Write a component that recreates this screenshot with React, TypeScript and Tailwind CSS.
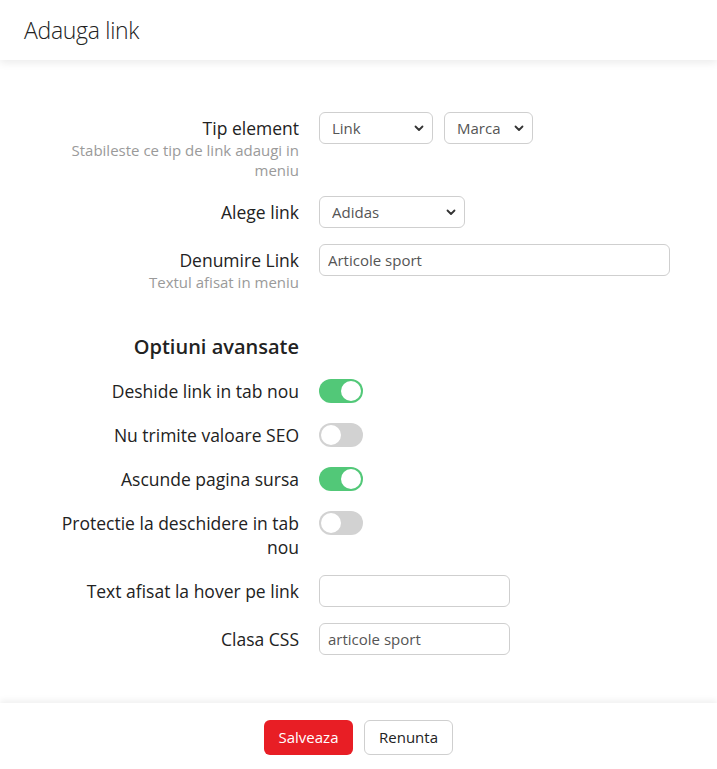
import { useState } from 'react'

function Chevron() {
  return (
    <svg width="10" height="7" viewBox="0 0 10 7" className="pointer-events-none absolute right-[9px] top-[13px]">
      <path d="M1.5 1.5 L5 5 L8.5 1.5" fill="none" stroke="#333" strokeWidth="1.8" strokeLinecap="round" strokeLinejoin="round" />
    </svg>
  )
}

function Select({ value, options, width }: { value: string; options: string[]; width: string }) {
  return (
    <div className={`relative ${width}`}>
      <select
        defaultValue={value}
        className="h-8 w-full appearance-none rounded-md border border-[#cfcfcf] bg-white pl-3 pr-7 text-[15px] text-[#555]"
      >
        {options.map((o) => (
          <option key={o}>{o}</option>
        ))}
      </select>
      <Chevron />
    </div>
  )
}

function Toggle({ on }: { on: boolean }) {
  const [v, setV] = useState(on)
  return (
    <button
      onClick={() => setV(!v)}
      className={`relative h-6 w-11 shrink-0 rounded-full transition ${v ? 'bg-[#52c878]' : 'bg-[#d2d2d2]'}`}
    >
      <span className={`absolute top-[2px] h-5 w-5 rounded-full bg-white transition-all ${v ? 'left-[22px]' : 'left-[2px]'}`} />
    </button>
  )
}

function Label({ text, hint }: { text: string; hint?: string }) {
  return (
    <div className="w-[319px] shrink-0 pl-[50px] pr-5 text-right">
      <div className="pt-1 text-[17.5px] leading-6 text-[#222]">{text}</div>
      {hint && <div className="text-[15px] leading-[20px] text-[#9a9a9a]">{hint}</div>}
    </div>
  )
}

function ToggleRow({ text, on }: { text: string; on: boolean }) {
  return (
    <div className="flex items-start">
      <div className="w-[319px] shrink-0 pl-[50px] pr-5 text-right text-[17.5px] leading-6 text-[#222]">{text}</div>
      <Toggle on={on} />
    </div>
  )
}

export default function App() {
  return (
    <div className="flex h-[769px] w-[717px] flex-col bg-white font-['Open_Sans',sans-serif]">
      {/* Header */}
      <div className="relative z-10 flex h-[60px] shrink-0 items-center px-6 shadow-[0_3px_8px_rgba(0,0,0,0.08)]">
        <h1 className="text-[23px] font-light tracking-[-0.3px] text-[#222]">Adauga link</h1>
      </div>

      {/* Body */}
      <div className="flex-1 pt-[52px]">
        <div className="flex items-start">
          <Label text="Tip element" hint="Stabileste ce tip de link adaugi in meniu" />
          <div className="flex gap-[11px]">
            <Select value="Link" options={['Link', 'Pagina', 'Categorie']} width="w-[114px]" />
            <Select value="Marca" options={['Marca', 'Produs']} width="w-[89px]" />
          </div>
        </div>

        <div className="mt-4 flex items-start">
          <Label text="Alege link" />
          <Select value="Adidas" options={['Adidas', 'Nike', 'Puma']} width="w-[146px]" />
        </div>

        <div className="mt-4 flex items-start">
          <Label text="Denumire Link" hint="Textul afisat in meniu" />
          <input
            defaultValue="Articole sport"
            className="h-8 w-[351px] rounded-md border border-[#cfcfcf] px-2 text-[15px] text-[#555]"
          />
        </div>

        <div className="mt-[41px] w-[319px] pr-5 text-right text-[20px] leading-[28px] font-semibold text-[#222]">
          Optiuni avansate
        </div>

        <div className="mt-[18px] flex flex-col gap-5">
          <ToggleRow text="Deshide link in tab nou" on={true} />
          <ToggleRow text="Nu trimite valoare SEO" on={false} />
          <ToggleRow text="Ascunde pagina sursa" on={true} />
          <ToggleRow text="Protectie la deschidere in tab nou" on={false} />
        </div>

        <div className="mt-4 flex items-start">
          <Label text="Text afisat la hover pe link" />
          <input className="h-8 w-[191px] rounded-md border border-[#cfcfcf] px-2 text-[15px] text-[#555]" />
        </div>

        <div className="mt-4 flex items-start">
          <Label text="Clasa CSS" />
          <input
            defaultValue="articole sport"
            className="h-8 w-[191px] rounded-md border border-[#cfcfcf] px-2 text-[15px] text-[#555]"
          />
        </div>
      </div>

      {/* Footer */}
      <div className="flex h-[66px] shrink-0 items-start justify-center gap-[11px] pt-[17px] shadow-[0_-3px_6px_rgba(0,0,0,0.06)]">
        <button className="h-[35px] w-[89px] rounded-md bg-[#e81e25] text-[15px] text-white">Salveaza</button>
        <button className="h-[35px] w-[89px] rounded-md border border-[#cfcfcf] bg-white text-[15px] text-[#222]">
          Renunta
        </button>
      </div>
    </div>
  )
}
